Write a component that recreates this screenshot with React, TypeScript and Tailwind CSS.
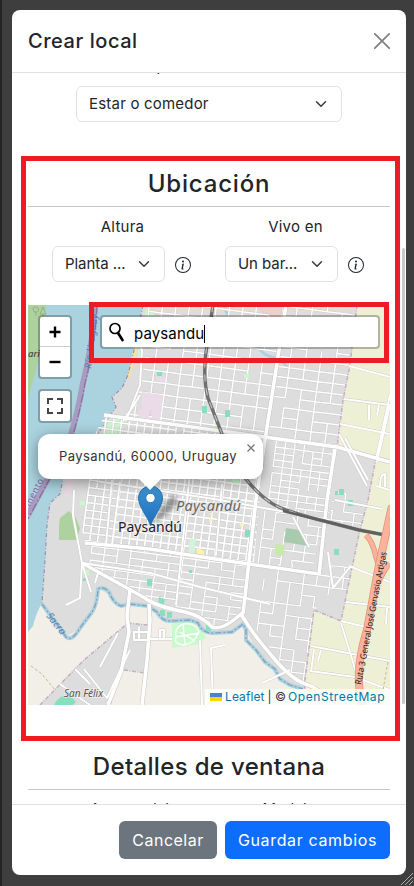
import React from "react";

type Pt = [number, number];

function seeded(seed: number) {
  let s = seed;
  return () => {
    s = (s * 16807) % 2147483647;
    return s / 2147483647;
  };
}

// Street segments on a skewed grid; a share of the segments is left out.
function streets(x0: number, y0: number, w: number, h: number, dx: number, dy: number, skip: number, seed: number) {
  const r = seeded(seed);
  const at = (i: number, j: number): Pt => {
    const u = i * dx;
    const v = j * dy;
    return [x0 + u - v * 0.135, y0 + v + u * 0.13];
  };
  let d = "";
  const nx = Math.ceil(w / dx);
  const ny = Math.ceil(h / dy);
  for (let i = 0; i <= nx; i++) {
    for (let j = 0; j <= ny; j++) {
      const a = at(i, j);
      const b = at(i + 1, j);
      const c = at(i, j + 1);
      if (r() > skip) d += `M${a[0].toFixed(1)} ${a[1].toFixed(1)}L${b[0].toFixed(1)} ${b[1].toFixed(1)}`;
      if (r() > skip) d += `M${a[0].toFixed(1)} ${a[1].toFixed(1)}L${c[0].toFixed(1)} ${c[1].toFixed(1)}`;
    }
  }
  return d;
}

const grids = [
  { clip: "gN", d: streets(140, 275, 280, 185, 13.2, 11.5, 0.08, 11), w: 1.5 },
  { clip: "gNE", d: streets(240, 280, 160, 190, 15, 10, 0.12, 57), w: 1.5 },
  { clip: "gC", d: streets(100, 405, 200, 180, 7.8, 7.5, 0.02, 23), w: 1.7 },
  { clip: "gE", d: streets(280, 415, 110, 100, 9.4, 6.4, 0.14, 5), w: 1.4 },
  { clip: "gE2", d: streets(270, 475, 120, 120, 11, 9, 0.35, 71), w: 1.4 },
  { clip: "gS", d: streets(95, 525, 190, 120, 13, 7, 0.22, 91), w: 1.4 },
  { clip: "gSE", d: streets(270, 535, 110, 170, 13, 11, 0.25, 37), w: 1.4 },
];

const stream =
  "M42 604L56 623L66 637Q72 642 80 628L92 612Q97 605 98 589Q104 586 109 592Q113 603 121 606L130 604L148 606L157 612Q162 621 170 621L190 620L198 623Q203 634 214 633L232 632L243 624L246 630L246 640L256 650L265 662L275 669L280 679L290 685L303 689";
const coast = "M143 305L139 325L134 350L128 375L122 388L112 397L116 407L104 425L98 434L63 470L62 484L60 494L50 503L47 525L45 560L42 603";
const railway = "M213 305L207 345Q202 375 208 398L222 434L236 465Q253 491 270 502Q280 510 324 521L359 530L385 535";
const mainRoads = [
  "M104 415L170 424L337 447L390 462",
  "M85 543L150 549L235 562L319 574",
  "M286 305L276 370L265 440L256 500L243 614",
  "M335 449L327 500L319 575",
  "M82 563L145 598Q155 606 185 612Q202 616 212 627Q222 631 241 614Q254 636 272 656Q289 677 303 683Q320 688 332 704",
  "M130 590L127 616L129 632L121 672L108 705",
  "M149 604L150 620L147 660L142 705",
];
const midRoads = [
  "M82 563L150 573L200 587L270 604",
  "M74 490L73 515L82 563L80 598L66 605",
  "M112 480L106 545M120 482L112 545",
  "M194 434L185 520L176 605",
  "M222 484L216 555M96 481L214 499L330 520",
  "M82 563L91 592M95 583L98 573",
  "M140 395L134 405L123 421M132 325L142 350L140 385L126 421",
  "M84 669L107 698L130 650M75 669L90 684M118 633L100 667M60 684L90 705",
  "M134 632H148V640H134ZM139 627V640M150 639H172M160 639V630H164V638M213 705L211 648L225 645M200 640L202 705M262 683L290 670",
  "M339 434L367 486M345 438L368 480M335 500L382 509M349 566L390 582M346 602L390 607",
  "M349 366L390 377M344 399L390 405M340 424L390 434M377 462L390 405M369 405L369 420M379 405L377 415M390 395L376 459",
  "M341 623L362 692M341 621L370 628M311 646L390 661M310 671L355 677L390 690M314 650L311 672M321 650L318 661M387 608L386 624",
  "M293 517L309 547M328 552L333 588L350 567M376 486L390 490M380 486Q380 474 385 474V487",
];
const greens: { c: string; p: string }[] = [
  { c: "#aed1a0", p: "M28 305H46L43 340L35 375L28 397Z" },
  { c: "#c8facc", p: "M110 419L126 419L122 430L115 435L102 435Z" },
  { c: "#c8facc", p: "M139 345L143 351L140 362H137ZM145 310h8v6h-8Z" },
  { c: "#aed1a0", p: "M59 526L60 518L69 511L76 518L80 528L77 540H59Z" },
  { c: "#c8facc", p: "M172 622L196 621L206 637L200 644L172 648ZM83 570h6v6h-6ZM80 501h5v4h-5Z" },
];
// Parks and squares that stay visible over the small streets.
const parks: { c: string; p: string }[] = [
  { c: "#a9cbad", p: "M286 528L299 530L308 546L284 542Z" },
  { c: "#c8e9a9", p: "M275 544L285 545L284 556L275 555ZM213 426h5v5h-5Z" },
  { c: "#d5f3da", p: "M190 538L196 539L194 555L188 554Z" },
  { c: "#c8facc", p: "M244 374h5v4h-5ZM232 479h7v4h-7Z" },
  { c: "#88dfbe", p: "M157 372h5v4h-5ZM202 406h5v7h-5ZM225 410h5v7h-5ZM245 530h5v7h-5ZM147 579h5v7h-5ZM159 597l6 2l-1 6l-6-1ZM160 610h5v6h-5ZM167 612h5v6h-5ZM206 625h5v6h-5ZM334 549h5v6h-5ZM335 491h3v4h-3ZM339 489h5v6h-5ZM348 500h5v6h-5ZM83 578h3v3h-3ZM189 570h3v3h-3Z" },
  { c: "#ebdbe8", p: "M142 392L163 395L160 421L152 419V409L149 410V419L138 417L139 410H142Z" },
  { c: "#fbf3a5", p: "M197 548l7 3v5h-7ZM210 513h3v2h-3ZM209 519h4v2h-4ZM240 523h4v3h-4Z" },
  { c: "#88dfbe", p: "M54 705Q58 696 69 694L76 702L73 705Z" },
];

function CityMap() {
  return (
    <svg viewBox="28 305 362 400" className="block h-[400px] w-[362px]" fontFamily="'Noto Sans', 'Open Sans', sans-serif">
      <defs>
        <clipPath id="gN"><path d="M148 305H285L265 437L124 417L141 385L146 350Z" /></clipPath>
        <clipPath id="gNE"><path d="M285 305H356L338 447L265 437Z" /></clipPath>
        <clipPath id="gC"><path d="M104 416L265 437L254 563L85 542L78 515L72 482Z" /></clipPath>
        <clipPath id="gE"><path d="M265 437L336 447L328 520L280 510L257 496Z" /></clipPath>
        <clipPath id="gE2"><path d="M257 496L328 520L320 575L251 563ZM335 490L368 496L360 528L328 521Z" /></clipPath>
        <clipPath id="gS"><path d="M85 544L250 563L242 612L218 628L190 610L150 600L84 562Z" /></clipPath>
        <clipPath id="gSE"><path d="M250 563L354 566L343 598L331 592L313 612L306 682L290 675L243 612Z" /></clipPath>
        <linearGradient id="pin" x1="0" y1="0" x2="0" y2="1">
          <stop offset="0" stopColor="#3d93d0" />
          <stop offset="1" stopColor="#1f6fc0" />
        </linearGradient>
        <filter id="soft"><feGaussianBlur stdDeviation="2" /></filter>
      </defs>
      <rect x="28" y="305" width="362" height="400" fill="#f2efe9" />
      <path d={`${coast}L56 623L66 637L80 628L97 600L99 589L110 595L121 606L148 606L162 621L198 624L206 634L232 632L243 624L256 650L280 680L304 690L314 611L341 621L360 534L390 500V305Z`} fill="#dddddd" />
      <path d="M128 623L148 625L145 672L122 670L108 705H40L75 668Z" fill="#dddddd" />
      <path d="M357 305L350 365L343 400L337 448L376 458L368 500L359 534L341 621L314 610L305 680L304 705H390V305Z" fill="#eef0d5" />
      <path d={`${coast}Q36 613 33 626L28 632V305Z`} fill="#aad3df" />
      <path d="M66 478L76 470L71 493L64 497Z" fill="#ead9e5" />
      {greens.map((g, i) => <path key={i} d={g.p} fill={g.c} />)}
      <path d="M157 377h8v5h-8Z" fill="#ebdbe8" />
      <path d="M257 305h28l-7 30h-8Z" fill="#ebd0cc" />
      <path d="M133 350L138 335L136 358L129 378H127Z" fill="#f7e3a4" />
      <path d={stream} fill="none" stroke="#aad3df" strokeWidth="4" />
      <path d={stream} fill="none" stroke="#8d9dbb" strokeWidth="1.3" strokeDasharray="6 2 2 2" />
      <path d={coast} fill="none" stroke="#9a8fb0" strokeWidth="1.2" strokeDasharray="4 2 1 2" />
      <path d="M95 305Q93 345 83 383Q78 412 70 438L46 482L28 515" fill="none" stroke="#a79dc0" strokeWidth="6" />
      <path d="M97 305Q95 345 85 383Q80 412 72 438L48 482L28 519" fill="none" stroke="#8d70a6" strokeWidth="1.3" strokeDasharray="9 2 2 2" />
      <path d="M224 305Q227 318 237 327M256 345Q264 357 276 358Q284 362 288 368" fill="none" stroke="#aad3df" strokeWidth="3" />
      {grids.map((g) => (
        <g key={g.clip} clipPath={`url(#${g.clip})`} fill="none" strokeLinecap="round">
          <path d={g.d} stroke="#c8c6c6" strokeWidth={g.w + 0.7} />
          <path d={g.d} stroke="#fff" strokeWidth={g.w} />
        </g>
      ))}
      {parks.map((g, i) => <path key={i} d={g.p} fill={g.c} />)}
      <path d="M357 305L350 365L343 400L337 448L376 458L368 500L359 534L341 621L314 610L305 680L304 700M40 705L84 660L128 623L148 625M124 670L145 673M122 670L110 705" fill="none" stroke="#c5adc5" strokeWidth="1.5" strokeDasharray="4 1.5 1 1.5" />
      <g fill="none" strokeLinejoin="round">
        {midRoads.map((d, i) => <path key={i} d={d} stroke="#cdcac6" strokeWidth="2.8" />)}
        {mainRoads.map((d, i) => <path key={i} d={d} stroke="#c8c5c1" strokeWidth="4.6" />)}
        {midRoads.map((d, i) => <path key={i} d={d} stroke="#fff" strokeWidth="2" />)}
        {mainRoads.map((d, i) => <path key={i} d={d} stroke="#fff" strokeWidth="3.6" />)}
        <path d="M176 637Q174 628 183 624Q196 622 199 632Q194 644 184 645Q173 644 176 637L199 633M183 624L185 645M180 632L195 641" stroke="#fff" strokeWidth="1.4" />
      </g>
      <path d={railway} fill="none" stroke="#707070" strokeWidth="3.4" />
      <path d={railway} fill="none" stroke="#c8c8c8" strokeWidth="1.1" strokeDasharray="7 7" />
      <path d="M283 511L324 521L359 530L385 535" fill="none" stroke="#606060" strokeWidth="2.4" />
      <path d="M366 535Q373 542 376 557L379 566M389 563L378 582" fill="none" stroke="#e58f78" strokeWidth="5.500" />
      <path d="M366 535Q373 542 376 557L379 566M389 563L378 582" fill="none" stroke="#f9b29c" strokeWidth="4" />
      <path d="M392 506L379 565L367 630Q353 675 363 705" fill="none" stroke="#e58f78" strokeWidth="8" />
      <path d="M392 506L379 565L367 630Q353 675 363 705" fill="none" stroke="#f9b29c" strokeWidth="6.500" />
      <path d="M31 666L42 674L55 690M388 662L383 690" fill="none" stroke="#cbb68a" strokeWidth="1" strokeDasharray="3 2" />
      <path d="M33 308q3-3 5 0t-1 4h-3t-1-4M36 312v4M43 307l-3 7h6ZM43 314v2" stroke="#8aa87c" strokeWidth="0.8" fill="none" />
      <text x="28" y="357" fontSize="9.500" fill="#333" fontStyle="italic">ario</text>
      <text transform="translate(91 369) rotate(-83)" fontSize="9.500" fill="#4d80b3" fontStyle="italic" textLength="55">Río Uruguay</text>
      <text transform="translate(30 507) rotate(-63)" fontSize="9" fill="#8461a0" textLength="30">mento</text>
      <text transform="translate(46 616) rotate(52)" fontSize="10" fill="#4d80b3" fontStyle="italic">Sacra</text>
      <text x="64" y="697" fontSize="10.500" fill="#555" fontStyle="italic" stroke="#eee" strokeWidth="1.500" paintOrder="stroke" textLength="39" lengthAdjust="spacingAndGlyphs">San Félix</text>
      <text x="176" y="511" fontSize="14.500" fill="#666" fontStyle="italic" stroke="#e8e8e8" strokeWidth="2" paintOrder="stroke" textLength="65">Paysandú</text>
      <path d="M151 524L165 503L174 494L178 503L165 516Z" fill="#000" opacity="0.35" filter="url(#soft)" />
      <text x="118" y="532" fontSize="14" fill="#222" stroke="#eee" strokeWidth="2" paintOrder="stroke" textLength="64">Paysandú</text>
      <text transform="translate(361 685) rotate(-79)" fontSize="9" fill="#222" textLength="135" lengthAdjust="spacingAndGlyphs">Ruta 3 General José Gervasio Artigas</text>
      <path d="M150.500 525.500C148 517 138.500 507 138.500 498A12 12 0 0 1 162.500 498C162.500 507 153 517 150.500 525.500Z" fill="url(#pin)" stroke="#2b70ad" strokeWidth="1" />
      <circle cx="150.500" cy="498" r="4.700" fill="#fff" stroke="#2f79b5" strokeWidth="1" />
    </svg>
  );
}

const Chevron = () => (
  <svg viewBox="0 0 16 16" className="h-3 w-3 shrink-0" fill="none" stroke="#343a40" strokeWidth="2" strokeLinecap="round" strokeLinejoin="round">
    <path d="m2 5 6 6 6-6" />
  </svg>
);

const Info = () => (
  <svg viewBox="0 0 16 16" className="h-4 w-4 shrink-0" fill="#212529">
    <path d="M8 15A7 7 0 1 1 8 1a7 7 0 0 1 0 14m0 1A8 8 0 1 0 8 0a8 8 0 0 0 0 16" />
    <path d="m8.930 6.588-2.290.287-.082.380.450.083c.294.070.352.176.288.469l-.738 3.468c-.194.897.105 1.319.808 1.319.545 0 1.178-.252 1.465-.598l.088-.416c-.200.176-.492.246-.686.246-.275 0-.375-.193-.304-.533zM9 4.500a1 1 0 1 1-2 0 1 1 0 0 1 2 0" />
  </svg>
);

function Field({ label, value }: { label: string; value: string }) {
  return (
    <div className="flex w-[173px] flex-col pl-6">
      <div className="h-6 w-[141px] text-center text-[15px] leading-6 tracking-[0.25px]">{label}</div>
      <div className="mt-[7px] flex items-center gap-2.5">
        <div className="flex h-9 w-[113px] items-center justify-between rounded-md border border-[#dee2e6] pr-3.5 pl-3 text-[15px]">
          <span className="tracking-[-0.05px]">{value}</span>
          <Chevron />
        </div>
        <div className="pt-0.5"><Info /></div>
      </div>
    </div>
  );
}

export default function App() {
  return (
    <div className="relative h-[886px] w-[414px] overflow-hidden border-l-2 border-[#232425] bg-[#3e3e3e] pt-2.5 pl-2.5 font-['Inter','Liberation_Sans',sans-serif] text-[#212529]">
      <div className="flex h-[865px] w-[394px] flex-col overflow-hidden rounded-lg bg-white">
        <header className="flex h-[63px] shrink-0 items-center justify-between border-b border-[#dee2e6] px-4">
          <h1 className="text-[20px] font-medium tracking-[0.55px]">Crear local</h1>
          <svg viewBox="0 0 16 16" className="h-4 w-4" stroke="#7f7f7f" strokeWidth="1.700" strokeLinecap="round">
            <path d="M.8.8l14.400 14.400M15.200.8.8 15.200" />
          </svg>
        </header>
        <main className="relative h-[731px] shrink-0 overflow-hidden px-4">
          <div className="-mt-[17px] h-[30px] text-center text-[15px] leading-5">Tipo de habitación</div>
          <div className="mx-auto flex h-9 w-[266px] items-center justify-between rounded-md border border-[#dee2e6] pr-3.5 pl-3 text-[15px]">
            <span className="tracking-[0.2px]">Estar o comedor</span>
            <Chevron />
          </div>
          <h2 className="mt-[47px] h-[38px] border-b border-[#c7c8c9] text-center text-2xl leading-[30px] font-medium tracking-[0.8px]">Ubicación</h2>
          <div className="mt-2 flex">
            <Field label="Altura" value="Planta ..." />
            <Field label="Vivo en" value="Un bar..." />
          </div>
          <div className="relative mt-[23px] h-[400px] w-[362px] overflow-hidden">
            <CityMap />
            <div className="absolute top-2.5 left-2.5 flex w-[34px] flex-col rounded border-2 border-black/25 bg-white bg-clip-padding">
              <div className="flex h-[30px] items-center justify-center border-b border-[#ccc]">
                <svg viewBox="0 0 12 12" className="h-3 w-3" stroke="#000" strokeWidth="2.400"><path d="M.5 6h11M6 .5v11" /></svg>
              </div>
              <div className="flex h-[30px] items-center justify-center">
                <svg viewBox="0 0 12 12" className="h-3 w-3" stroke="#000" strokeWidth="2.400"><path d="M.5 6h11" /></svg>
              </div>
            </div>
            <div className="absolute top-[84px] left-2.5 flex h-[34px] w-[34px] items-center justify-center rounded border-2 border-black/25 bg-white bg-clip-padding">
              <svg viewBox="0 0 16 16" className="h-4 w-4" fill="none" stroke="#464646" strokeWidth="2"><path d="M1 6V1h5M10 1h5v5M15 10v5h-5M6 15H1v-5" /></svg>
            </div>
            <div className="absolute top-2.5 left-[72px] flex h-[34px] w-[280px] items-center rounded border-2 border-black/25 bg-white bg-clip-padding pl-1.5">
              <svg viewBox="0 0 18 20" className="h-5 w-[18px]" fill="none" stroke="#000"><circle cx="7" cy="6.500" r="5" strokeWidth="1.700" /><path d="m10 11 4.500 7" strokeWidth="2.700" strokeLinecap="round" /></svg>
              <span className="mt-1 ml-2 border-r border-black text-[15px] leading-[18px] tracking-[0.12px] text-black">paysandu</span>
            </div>
            <div className="absolute top-[129px] left-2.5 flex h-[45px] w-[225px] items-center rounded-xl bg-white pl-[21px] text-[13px] text-[#333] shadow-[0_3px_14px_rgba(0,0,0,0.4)]">
              <span className="tracking-[0.42px] whitespace-nowrap">Paysandú, 60000, Uruguay</span>
              <svg viewBox="0 0 8 8" className="absolute top-[10px] right-2 h-2 w-2" stroke="#757575" strokeWidth="1.300"><path d="m.5.5 7 7m0-7-7 7" /></svg>
              <svg viewBox="0 0 24 12" className="absolute top-[44px] left-[100px] h-3 w-6" fill="#fff"><path d="M0 0h24L12 12Z" /></svg>
            </div>
            <div className="absolute right-0 bottom-0 flex h-4 w-[185px] items-center bg-white/80 pl-[5px] text-xs text-[#0078a8]">
              <svg viewBox="0 0 12 8" className="mr-[3px] h-2 w-3"><path fill="#4c7be1" d="M0 0h12v4H0z" /><path fill="#ffd500" d="M0 4h12v4H0z" /></svg>
              <span className="tracking-[0.1px]">Leaflet</span>
              <span className="mr-[2px] ml-[3px] text-[#333]">| ©</span>
              <span className="tracking-[0.6px] whitespace-nowrap">OpenStreetMap</span>
            </div>
          </div>
          <h2 className="mt-[47px] h-[38px] border-b border-[#c7c8c9] text-center text-2xl leading-[30px] font-medium tracking-[0.33px]">Detalles de ventana</h2>
          <div className="mt-[7px] flex pl-[15px] text-center text-[15px] leading-6">
            <div className="w-[173px]">Acceso del</div>
            <div className="w-[146px]">Modelo</div>
          </div>
          <div className="absolute top-[175px] right-px h-[456px] w-[3px] rounded-full bg-[#c9c9c9]" />
        </main>
        <footer className="flex grow items-center justify-end gap-2 border-t border-[#dee2e6] px-4">
          <button className="h-[38px] w-[98px] rounded-md bg-[#6c757d] text-base tracking-[0.5px] text-white">Cancelar</button>
          <button className="h-[38px] w-[165px] rounded-md bg-[#0d6efd] text-base tracking-[0.65px] whitespace-nowrap text-white">Guardar cambios</button>
        </footer>
      </div>
      <div className="pointer-events-none absolute top-[156px] left-[19px] h-[585px] w-[379px] border-5 border-[#ed1c24]" />
      <div className="pointer-events-none absolute top-[302px] left-[87px] h-[61px] w-[300px] border-5 border-[#ed1c24]" />
      <svg viewBox="0 0 14 14" className="absolute right-0 bottom-0 h-3.5 w-3.5" stroke="#a8a8a8" strokeWidth="1"><path d="M1 13 13 1M5 13l8-8M9 13l4-4" /></svg>
    </div>
  );
}
